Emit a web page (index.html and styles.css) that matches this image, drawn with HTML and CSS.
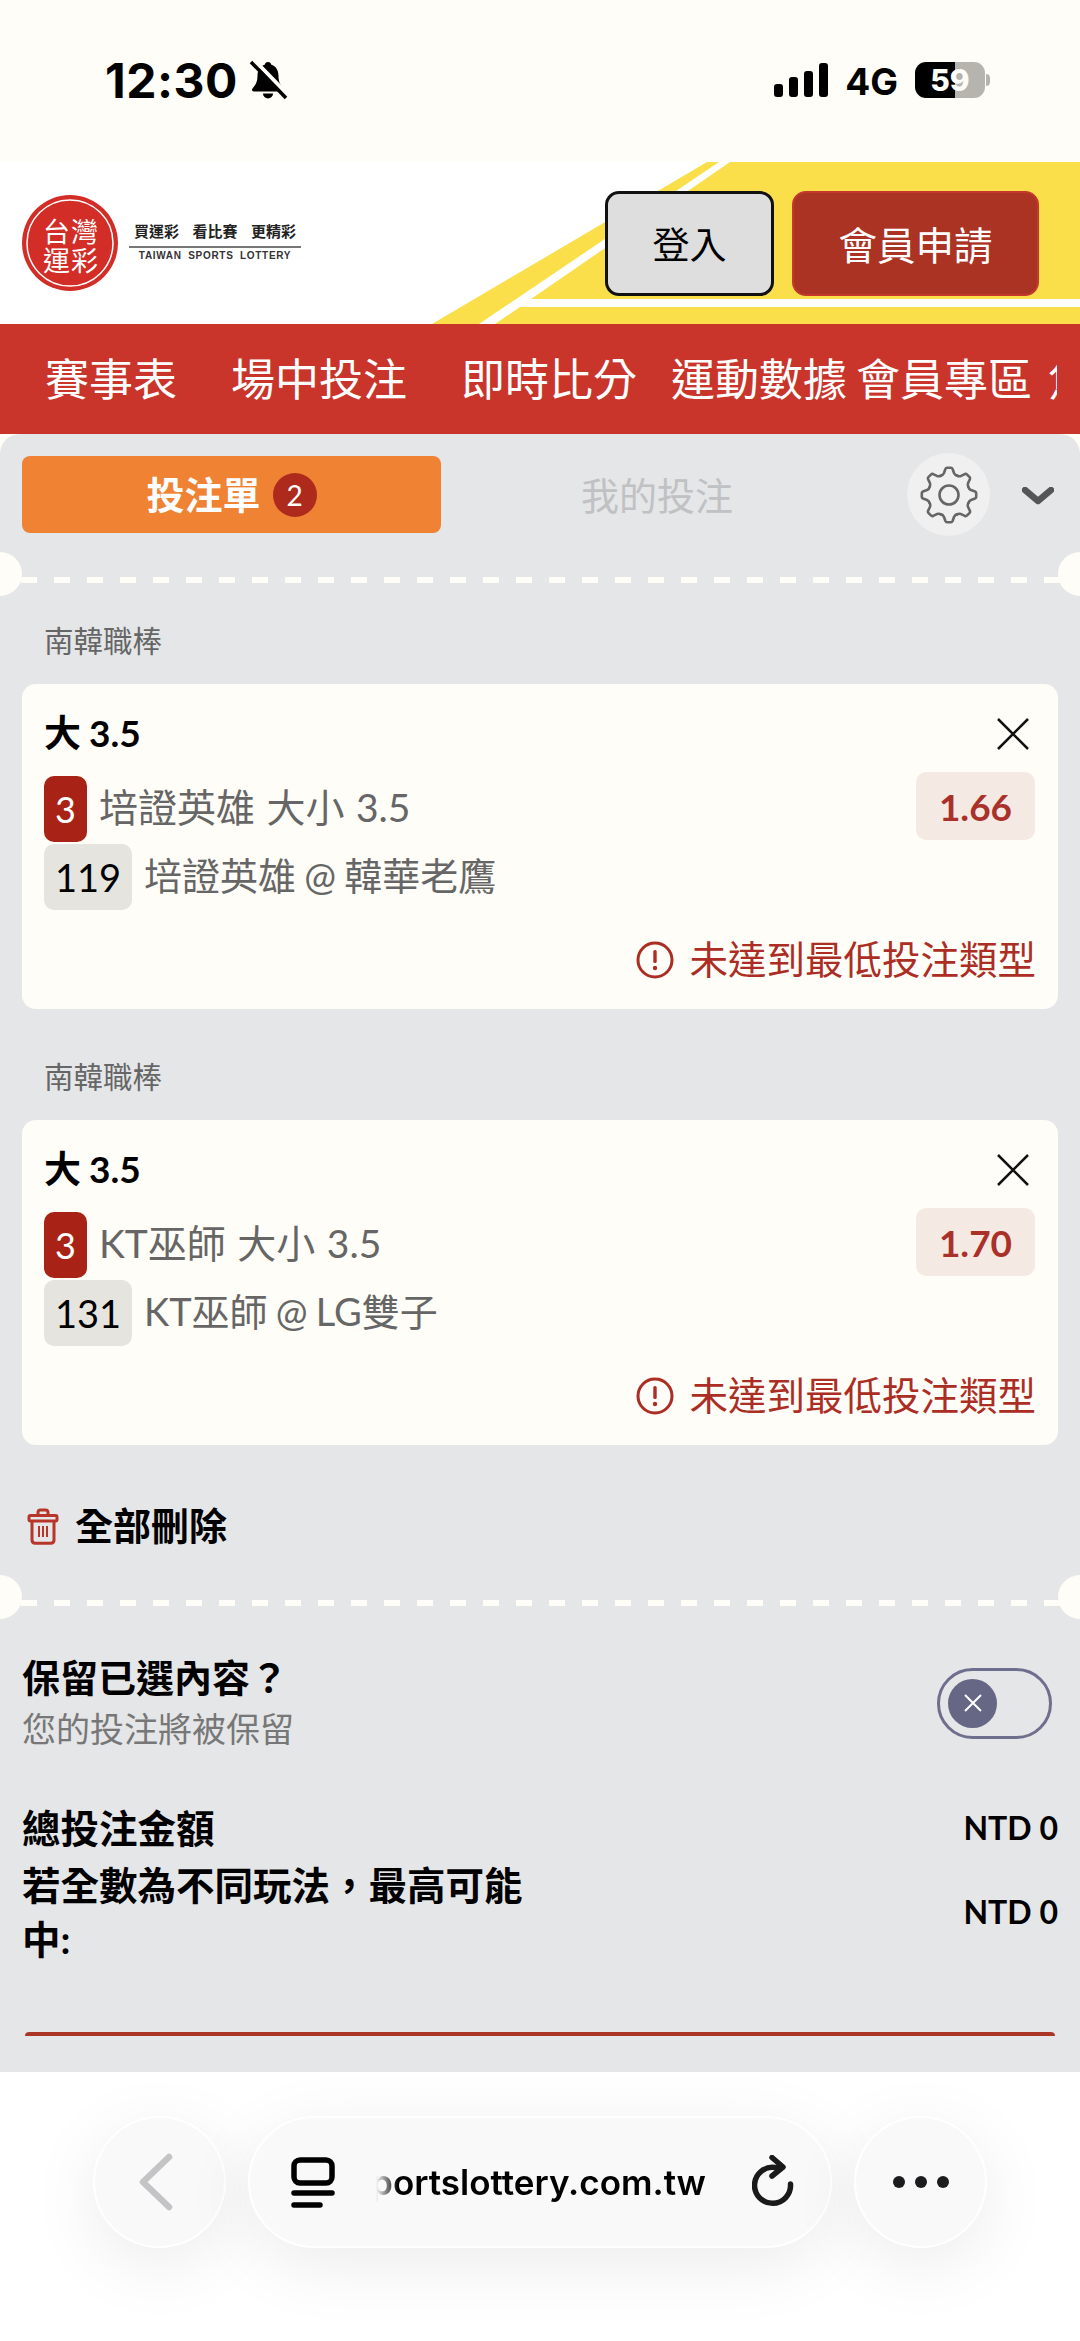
FILE: index.html
```html
<!DOCTYPE html>
<html lang="zh-Hant">
<head>
  <meta charset="UTF-8">
  <meta name="viewport" content="width=device-width, initial-scale=1.0">
  <title>台灣運彩 投注單</title>
  <link rel="stylesheet" href="styles.css">
</head>
<body>
  <div class="status-bar">
    <span class="status-time">12:30</span>
    <svg class="status-bell" width="38" height="39" viewBox="0 0 38 39">
      <path d="M19 1c-2 0-3 1-3 2.500C11 5 8.500 9.500 8.500 15c0 6-2 9-5 12.500-1 1.300-.5 3 1.500 3h28c2 0 2.500-1.700 1.500-3-3-3.500-5-6.500-5-12.500 0-5.500-2.500-10-7.500-11.500 0-1.500-1-2.500-3-2.500Z"/>
      <path d="M14 32.500a5 5 0 0 0 10 0Z"/>
      <line class="bell-gap" x1="5" y1="-1" x2="40" y2="35"/>
      <line class="bell-slash" x1="2" y1="1" x2="37" y2="37"/>
    </svg>
    <div class="status-right">
      <div class="signal">
        <span class="signal-bar signal-1"></span>
        <span class="signal-bar signal-2"></span>
        <span class="signal-bar signal-3"></span>
        <span class="signal-bar signal-4"></span>
      </div>
      <span class="network">4G</span>
      <div class="battery"><span class="battery-text">59</span></div>
      <span class="battery-nub"></span>
    </div>
  </div>

  <header class="site-header">
    <svg class="header-bg" width="1080" height="162" viewBox="0 0 1080 162">
      <polygon points="707,0 719,0 479,162 432,162"/>
      <polygon points="730,0 1080,0 1080,137 531,137"/>
      <polygon points="520,145 1080,145 1080,162 495,162"/>
    </svg>
    <div class="logo">
      <svg class="logo-mark" width="96" height="96" viewBox="0 0 96 96">
        <circle cx="48" cy="48" r="48" fill="#d22d26"/>
        <circle cx="48" cy="48" r="43" fill="none" stroke="#fff" stroke-width="1.500"/>
        <text class="logo-char" x="21" y="47">台</text>
        <text class="logo-char" x="49" y="47">灣</text>
        <text class="logo-char" x="21" y="76">運</text>
        <text class="logo-char" x="49" y="76">彩</text>
      </svg>
      <div class="logo-text">
        <div class="logo-slogan">買運彩 看比賽 更精彩</div>
        <div class="logo-en">TAIWAN SPORTS LOTTERY</div>
      </div>
    </div>
    <div class="header-actions">
      <button class="btn-login">登入</button>
      <button class="btn-join">會員申請</button>
    </div>
  </header>

  <nav class="main-nav">
    <div class="nav-inner">
      <a class="nav-item">賽事表</a>
      <a class="nav-item">場中投注</a>
      <a class="nav-item nav-item-tight">即時比分</a>
      <a class="nav-item nav-item-tighter">運動數據</a>
      <a class="nav-item nav-item-near">會員專區</a>
      <a class="nav-item">焦點賽事</a>
    </div>
  </nav>

  <main class="slip">
    <div class="slip-tabs">
      <div class="tab-active">投注單 <span class="tab-count">2</span></div>
      <div class="tab-other">我的投注</div>
      <div class="gear-btn">
        <svg width="60" height="60" viewBox="-30 -30 60 60">
          <defs>
            <path id="tooth" d="M-8.040-19.400Q-6-19.800-5-22L-3.600-26Q-3-27.200-2-27.200H2Q3-27.200 3.600-26L5-22Q6-19.800 8.040-19.400"/>
          </defs>
          <g class="gear-lines">
            <use href="#tooth"/>
            <use href="#tooth" transform="rotate(45)"/>
            <use href="#tooth" transform="rotate(90)"/>
            <use href="#tooth" transform="rotate(135)"/>
            <use href="#tooth" transform="rotate(180)"/>
            <use href="#tooth" transform="rotate(225)"/>
            <use href="#tooth" transform="rotate(270)"/>
            <use href="#tooth" transform="rotate(315)"/>
            <circle r="9.500"/>
          </g>
        </svg>
      </div>
      <svg class="slip-chevron" width="32" height="18" viewBox="0 0 32 18">
        <polyline points="3,3 16,14 29,3"/>
      </svg>
    </div>

    <div class="ticket-line"></div>

    <section class="bet-group">
      <div class="league">南韓職棒</div>
      <div class="bet-card">
        <div class="bet-head">
          <span class="bet-title">大 3.5</span>
          <svg class="close-icon" width="32" height="32" viewBox="0 0 32 32"><path d="M1 1 31 31M31 1 1 31"/></svg>
        </div>
        <div class="bet-row">
          <span class="market-no">3</span>
          <span class="bet-desc bet-desc-market">培證英雄 大小 3.5</span>
          <span class="odds">1.66</span>
        </div>
        <div class="bet-row bet-row-second">
          <span class="game-no">119</span>
          <span class="bet-desc">培證英雄 @ 韓華老鷹</span>
        </div>
        <div class="bet-warning">
          <svg width="38" height="38" viewBox="0 0 38 38">
            <circle cx="19" cy="19" r="17" fill="none" stroke="#ac2d24" stroke-width="3"/>
            <rect x="17.300" y="9" width="3.400" height="13" rx="1.500" fill="#ac2d24"/>
            <circle cx="19" cy="27" r="2.200" fill="#ac2d24"/>
          </svg>
          <span class="warning-text">未達到最低投注類型</span>
        </div>
      </div>
    </section>

    <section class="bet-group bet-group-next">
      <div class="league">南韓職棒</div>
      <div class="bet-card">
        <div class="bet-head">
          <span class="bet-title">大 3.5</span>
          <svg class="close-icon" width="32" height="32" viewBox="0 0 32 32"><path d="M1 1 31 31M31 1 1 31"/></svg>
        </div>
        <div class="bet-row">
          <span class="market-no">3</span>
          <span class="bet-desc bet-desc-market">KT巫師 大小 3.5</span>
          <span class="odds">1.70</span>
        </div>
        <div class="bet-row bet-row-second">
          <span class="game-no">131</span>
          <span class="bet-desc">KT巫師 @ LG雙子</span>
        </div>
        <div class="bet-warning">
          <svg width="38" height="38" viewBox="0 0 38 38">
            <circle cx="19" cy="19" r="17" fill="none" stroke="#ac2d24" stroke-width="3"/>
            <rect x="17.300" y="9" width="3.400" height="13" rx="1.500" fill="#ac2d24"/>
            <circle cx="19" cy="27" r="2.200" fill="#ac2d24"/>
          </svg>
          <span class="warning-text">未達到最低投注類型</span>
        </div>
      </div>
    </section>

    <div class="delete-all">
      <svg class="trash-icon" width="32" height="37" viewBox="0 0 32 37">
        <path d="M11 7V4.500Q11 2 13.500 2H18.500Q21 2 21 4.500V7"/>
        <rect x="2" y="7.500" width="28" height="5.500" rx="1.500"/>
        <path d="M5 13V32Q5 35.300 8.300 35.300H23.700Q27 35.300 27 32V13"/>
        <path class="trash-thin" d="M12 18V29M16 18V29M20 18V29"/>
      </svg>
      <span class="delete-text">全部刪除</span>
    </div>

    <div class="ticket-line ticket-line-lower"></div>

    <div class="keep-row">
      <div>
        <div class="keep-title">保留已選內容？</div>
        <div class="keep-sub">您的投注將被保留</div>
      </div>
      <div class="toggle">
        <span class="toggle-knob">
          <svg width="20" height="20" viewBox="0 0 20 20"><path d="M2 2 18 18M18 2 2 18"/></svg>
        </span>
      </div>
    </div>

    <div class="total-row total-row-first">
      <div class="total-label">總投注金額</div>
      <div class="total-value">NTD 0</div>
    </div>
    <div class="total-row">
      <div class="total-label">若全數為不同玩法，最高可能中:</div>
      <div class="total-value">NTD 0</div>
    </div>

    <div class="submit-edge"></div>
  </main>

  <div class="browser-bar">
    <div class="round-btn">
      <svg class="back-icon" width="34" height="58" viewBox="0 0 34 58"><polyline points="30,4 4,29 30,54"/></svg>
    </div>
    <div class="url-pill">
      <svg class="tabs-icon" width="44" height="51" viewBox="0 0 44 51">
        <rect x="3" y="3" width="38" height="23" rx="6"/>
        <path d="M3 36H41M3 48H29"/>
      </svg>
      <div class="url-text"><span>sportslottery.com.tw</span></div>
      <svg class="reload-icon" width="44" height="54" viewBox="21 13 44 54">
        <path d="M59.500 42A18 18 0 1 1 44 25.500H51"/>
        <polyline points="41,15.500 52,25 41,34"/>
      </svg>
    </div>
    <div class="round-btn">
      <div class="dots"><span></span><span></span><span></span></div>
    </div>
  </div>
</body>
</html>
```

FILE: styles.css
```css
* {
  box-sizing: border-box;
}

html, body {
  margin: 0;
  padding: 0;
}

body {
  width: 1080px;
  height: 2341px;
  overflow: hidden;
  display: flex;
  flex-direction: column;
  background-color: #fffdf7;
  font-family: Lato, "Noto Sans CJK TC", sans-serif;
  color: #000;
}

/* Phone status bar */
.status-bar {
  height: 162px;
  display: flex;
  align-items: center;
  padding: 0 90px 2px 105px;
  font-family: Inter, sans-serif;
}

.status-time {
  font-size: 48px;
  font-weight: 700;
  letter-spacing: 0.5px;
}

.status-bell {
  margin-left: 11px;
  overflow: visible;
}

.bell-gap {
  stroke: #fffdf7;
  stroke-width: 4;
}

.bell-slash {
  stroke: #000;
  stroke-width: 3.5;
}

.status-right {
  margin-left: auto;
  display: flex;
  align-items: center;
}

.signal {
  display: flex;
  align-items: flex-end;
  gap: 6px;
  height: 34px;
}

.signal-bar {
  width: 9px;
  background-color: #000;
  border-radius: 3px;
}

.signal-1 { height: 13px; }
.signal-2 { height: 20px; }
.signal-3 { height: 26px; }
.signal-4 { height: 34px; }

.network {
  margin: 2px 0 0 17px;
  font-size: 37px;
  font-weight: 700;
}

.battery {
  margin-left: 17px;
  width: 70px;
  height: 36px;
  border-radius: 11px;
  background: linear-gradient(90deg, #000 0 40px, #b5b4af 40px);
  display: flex;
  align-items: center;
  justify-content: center;
}

.battery-text {
  color: #fffdf7;
  font-size: 30px;
  font-weight: 800;
  line-height: 1;
}

.battery-nub {
  width: 4px;
  height: 12px;
  margin-left: 1px;
  background-color: #b5b4af;
  border-radius: 0 6px 6px 0;
}

/* Site header */
.site-header {
  position: relative;
  height: 162px;
  background-color: #fff;
  display: flex;
  align-items: center;
  justify-content: space-between;
  padding: 0 41px 0 22px;
}

.header-bg {
  position: absolute;
  left: 0;
  top: 0;
  fill: #fadf4b;
}

.logo,
.header-actions {
  position: relative;
  display: flex;
  align-items: center;
}

.logo-char {
  fill: #fff;
  font-family: "Noto Sans CJK TC", sans-serif;
  font-size: 27px;
}

.logo-text {
  width: 172px;
  margin-left: 11px;
  padding-bottom: 3px;
  text-align: center;
  white-space: nowrap;
}

.logo-slogan {
  font-family: "Noto Sans CJK TC", sans-serif;
  font-size: 15px;
  font-weight: 700;
  line-height: 22px;
  word-spacing: 10px;
  color: #222;
  border-bottom: 2px solid #777;
  padding-bottom: 4px;
}

.logo-en {
  font-family: "Liberation Sans", sans-serif;
  font-size: 10px;
  font-weight: 700;
  line-height: 15px;
  letter-spacing: 0.7px;
  word-spacing: 3px;
  color: #333;
}

.header-actions button {
  height: 105px;
  font-family: "Noto Sans CJK TC", sans-serif;
  font-size: 37px;
  padding: 0;
}

.btn-login {
  width: 169px;
  background-color: #dedede;
  border: 3px solid #111;
  border-radius: 14px;
  color: #000;
}

.header-actions .btn-join {
  width: 247px;
  margin-left: 18px;
  background-color: #aa3324;
  border: 2px solid #c4392c;
  border-radius: 14px;
  color: #fff;
  font-size: 38.500px;
}

/* Red menu */
.main-nav {
  height: 110px;
  background-color: #c9352b;
  display: flex;
  align-items: center;
  padding: 0 0 5px 45px;
}

.nav-inner {
  width: 1012px;
  display: flex;
  overflow: hidden;
  white-space: nowrap;
}

.nav-item {
  flex: none;
  color: #fff;
  font-family: "Noto Sans CJK TC", sans-serif;
  font-size: 44px;
  line-height: 70px;
  margin-right: 54px;
}

.nav-item-tight {
  margin-right: 34px;
}

.nav-item-tighter {
  margin-right: 9px;
}

.nav-item-near {
  margin-right: 16px;
}

/* Bet slip */
.slip {
  flex: 1;
  min-height: 0;
  overflow: hidden;
  background-color: #e5e6e8;
  border-radius: 20px 20px 0 0;
}

.slip-tabs {
  display: flex;
  align-items: center;
  padding: 19px 26px 0 22px;
}

.tab-active {
  width: 419px;
  height: 77px;
  padding-bottom: 4px;
  background-color: #f08233;
  border-radius: 8px;
  color: #fff;
  font-size: 38px;
  font-weight: 700;
  display: flex;
  align-items: center;
  justify-content: center;
  gap: 12px;
  white-space: nowrap;
}

.tab-count {
  width: 44px;
  height: 44px;
  margin-top: 4px;
  border-radius: 50%;
  background-color: #ad2a1c;
  font-size: 28px;
  font-weight: 400;
  display: flex;
  align-items: center;
  justify-content: center;
}

.tab-other {
  margin-left: 140px;
  padding-bottom: 3px;
  font-size: 38px;
  color: #c0c1c3;
}

.gear-btn {
  margin-left: auto;
  width: 83px;
  height: 83px;
  border-radius: 50%;
  background-color: #f0f0f1;
  display: flex;
  align-items: center;
  justify-content: center;
}

.gear-lines {
  fill: none;
  stroke: #666;
  stroke-width: 2.600;
  stroke-linecap: round;
  stroke-linejoin: round;
}

.slip-chevron {
  margin: 2px 0 0 32px;
  fill: none;
  stroke: #555;
  stroke-width: 6.500;
  stroke-linecap: round;
  stroke-linejoin: round;
}

/* dashed line with the punched holes at both edges */
.ticket-line {
  position: relative;
  height: 6px;
  margin-top: 41px;
  background-image: linear-gradient(90deg, #fffdf7 0 16.500px, transparent 16.500px);
  background-size: 33px 6px;
  background-position: 21px 0;
}

.ticket-line-lower {
  margin-top: 52px;
}

.ticket-line::before,
.ticket-line::after {
  content: "";
  position: absolute;
  top: -25px;
  width: 44px;
  height: 44px;
  border-radius: 50%;
  background-color: #fffdf7;
}

.ticket-line::before {
  left: -22px;
}

.ticket-line::after {
  right: -22px;
}

.bet-group {
  margin: 38px 22px 0;
}

.bet-group-next {
  margin-top: 48px;
}

.league {
  padding: 0 0 3px 22px;
  font-size: 29.500px;
  line-height: 40px;
  color: #666;
}

.bet-card {
  margin-top: 20px;
  height: 325px;
  background-color: #fffdf7;
  border-radius: 14px;
  padding: 25px 22px 0 22px;
}

.bet-head {
  display: flex;
  align-items: center;
  justify-content: space-between;
  height: 50px;
  margin-bottom: 13px;
}

.bet-title {
  padding-bottom: 6px;
  font-size: 37px;
  font-weight: 700;
  word-spacing: -1px;
}

.close-icon {
  margin-right: 7px;
  fill: none;
  stroke: #111;
  stroke-width: 2.500;
}

.bet-row {
  display: flex;
  align-items: flex-end;
  height: 70px;
}

.bet-row-second {
  height: 66px;
  margin-top: 2px;
}

.market-no {
  flex: none;
  width: 43px;
  height: 66px;
  border-radius: 10px;
  background-color: #a82315;
  color: #fff;
  font-size: 36px;
  display: flex;
  align-items: center;
  justify-content: center;
}

.game-no {
  flex: none;
  width: 88px;
  height: 66px;
  border-radius: 10px;
  background-color: #e6e4df;
  font-size: 38px;
  display: flex;
  align-items: center;
  justify-content: center;
}

.bet-desc {
  height: 66px;
  line-height: 63px;
  margin-left: 12px;
  font-size: 38px;
  word-spacing: -1.500px;
  color: #666;
  white-space: nowrap;
}

.bet-desc-market {
  font-size: 39px;
  word-spacing: 1.500px;
}

.odds {
  margin-left: auto;
  margin-right: 1px;
  width: 119px;
  height: 68px;
  align-self: flex-start;
  border-radius: 10px;
  background-color: #f5e9e3;
  color: #a9312a;
  font-size: 37px;
  font-weight: 700;
  display: flex;
  align-items: center;
  justify-content: center;
}

.bet-warning {
  display: flex;
  align-items: center;
  justify-content: flex-end;
  gap: 15px;
  height: 44px;
  margin-top: 28px;
  font-size: 38.500px;
  color: #ac2d24;
  white-space: nowrap;
}

.warning-text {
  padding-bottom: 6px;
}

.delete-all {
  display: flex;
  align-items: center;
  gap: 16px;
  height: 44px;
  margin: 59px 0 0 27px;
  font-size: 38px;
  font-weight: 700;
}

.delete-text {
  padding-bottom: 6px;
}

.trash-icon {
  fill: none;
  stroke: #b8352a;
  stroke-width: 3;
  stroke-linejoin: round;
}

.trash-thin {
  stroke-width: 2;
}

.keep-row {
  display: flex;
  align-items: center;
  justify-content: space-between;
  margin-top: 47px;
  padding: 0 28px 0 22px;
}

.keep-title {
  font-size: 38px;
  font-weight: 600;
  line-height: 48px;
}

.keep-sub {
  margin-top: 4px;
  font-size: 34px;
  line-height: 48px;
  color: #777;
}

.toggle {
  width: 115px;
  height: 71px;
  border: 3px solid #6e6e8e;
  border-radius: 36px;
  padding-left: 8px;
  display: flex;
  align-items: center;
}

.toggle-knob {
  width: 49px;
  height: 49px;
  border-radius: 50%;
  background-color: #656785;
  display: flex;
  align-items: center;
  justify-content: center;
}

.toggle-knob svg {
  fill: none;
  stroke: #fff;
  stroke-width: 2;
}

.total-row {
  display: flex;
  align-items: center;
  justify-content: space-between;
  margin-top: 3px;
  padding: 0 22px;
}

.total-row-first {
  margin-top: 48px;
}

.total-label {
  width: 510px;
  font-size: 38.500px;
  font-weight: 700;
  line-height: 54px;
}

.total-value {
  padding-bottom: 2px;
  font-size: 32px;
  font-weight: 700;
  white-space: nowrap;
}

.submit-edge {
  height: 4px;
  margin: 66px 25px 0;
  background-color: #ab3526;
  border-radius: 8px 8px 0 0;
}

/* Browser toolbar */
.browser-bar {
  height: 269px;
  background-color: #fff;
  display: flex;
  align-items: flex-start;
  gap: 22px;
  padding: 44px 0 0 93px;
  font-family: Inter, sans-serif;
}

.round-btn,
.url-pill {
  height: 132px;
  background-color: #f9f9f9;
  border: 2px solid #fff;
  box-shadow: 0 16px 70px rgba(0, 0, 0, 0.08);
  display: flex;
  align-items: center;
}

.round-btn {
  width: 133px;
  border-radius: 50%;
  justify-content: center;
}

.url-pill {
  width: 584px;
  border-radius: 66px;
  padding: 0 34px 0 41px;
}

.back-icon {
  margin-right: 8px;
  fill: none;
  stroke: #c4c4c6;
  stroke-width: 6.500;
  stroke-linecap: round;
  stroke-linejoin: round;
}

.tabs-icon {
  flex: none;
  fill: none;
  stroke: #000;
  stroke-width: 5.500;
  stroke-linecap: round;
}

.url-text {
  width: 339px;
  margin-left: 37px;
  display: flex;
  justify-content: flex-end;
  overflow: hidden;
  white-space: nowrap;
  font-size: 35px;
  font-weight: 600;
  color: #000;
  -webkit-mask-image: linear-gradient(90deg, transparent 0, transparent 4px, #000 26px);
  mask-image: linear-gradient(90deg, transparent 0, transparent 4px, #000 26px);
}

.url-text span {
  flex: none;
}

.reload-icon {
  flex: none;
  margin-left: 46px;
  fill: none;
  stroke: #1a1a1a;
  stroke-width: 5.500;
  stroke-linecap: round;
  stroke-linejoin: round;
}

.dots {
  display: flex;
  gap: 10px;
}

.dots span {
  width: 12px;
  height: 12px;
  border-radius: 50%;
  background-color: #1c1c1e;
}
```
